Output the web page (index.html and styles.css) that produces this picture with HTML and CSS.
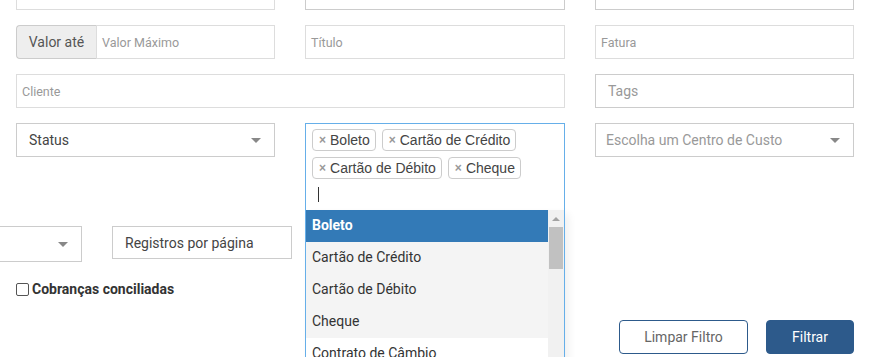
FILE: index.html
```html
<!DOCTYPE html>
<html lang="pt-BR">
<head>
<meta charset="utf-8">
<title>Filtros</title>
<link rel="stylesheet" href="styles.css">
</head>
<body>
<div class="page">
  <div class="grid">
    <div class="field"></div>
    <div class="field dark"></div>
    <div class="field dark"></div>

    <div class="group">
      <span class="addon">Valor até</span>
      <span class="field ph">Valor Máximo</span>
    </div>
    <div class="field ph">Título</div>
    <div class="field ph">Fatura</div>

    <div class="field ph span2">Cliente</div>
    <div class="field dark tags">Tags</div>

    <div class="select"><span class="sel-text">Status</span><span class="caret"></span></div>
    <div class="multi-wrap">
      <div class="multi">
        <div class="chips">
          <span class="chip"><span class="x">×</span>Boleto</span>
          <span class="chip"><span class="x">×</span>Cartão de Crédito</span>
          <span class="chip"><span class="x">×</span>Cartão de Débito</span>
          <span class="chip"><span class="x">×</span>Cheque</span>
        </div>
        <span class="cursor"></span>
      </div>
      <div class="dropdown">
        <ul class="options">
          <li class="opt hl">Boleto</li>
          <li class="opt sel">Cartão de Crédito</li>
          <li class="opt sel">Cartão de Débito</li>
          <li class="opt sel">Cheque</li>
          <li class="opt">Contrato de Câmbio</li>
        </ul>
        <div class="scrollbar">
          <span class="arrow-up"></span>
          <span class="thumb"></span>
        </div>
      </div>
    </div>
    <div class="select centro"><span class="sel-text muted">Escolha um Centro de Custo</span><span class="caret"></span></div>
  </div>

  <div class="row5">
    <div class="select tall"><span class="sel-text"></span><span class="caret"></span></div>
    <div class="field plain">Registros por página</div>
  </div>

  <label class="check"><span class="box"></span>Cobranças conciliadas</label>

  <div class="actions">
    <button class="btn outline">Limpar Filtro</button>
    <button class="btn primary">Filtrar</button>
  </div>
</div>
</body>
</html>
```

FILE: styles.css
```css
html, body {
  margin: 0;
  padding: 0;
  background: #fff;
  width: 885px;
  height: 357px;
  overflow: hidden;
  font-family: Roboto, "Liberation Sans", Arial, sans-serif;
  color: #333;
}

.page {
  padding-left: 16px;
  position: relative;
}

.grid {
  display: grid;
  grid-template-columns: 259px 260px 259px;
  column-gap: 30px;
  row-gap: 15px;
  margin-top: -24px;
  align-items: start;
}

.field {
  box-sizing: border-box;
  height: 34px;
  border: 1px solid #ddd;
  background: #fff;
  display: flex;
  align-items: center;
  padding: 0 5px;
  font-size: 12.5px;
}
.field.dark { border-color: #ccc; }
.ph { color: #999; }
.span2 { grid-column: span 2; }
.tags {
  font-size: 14px;
  color: #999;
  padding-left: 12px;
}

.group {
  display: flex;
  height: 34px;
}
.addon {
  box-sizing: border-box;
  width: 80px;
  height: 34px;
  background: #eee;
  border: 1px solid #ccc;
  border-right: 0;
  border-radius: 4px 0 0 4px;
  display: flex;
  align-items: center;
  justify-content: center;
  font-size: 14px;
  color: #555;
}
.group .field {
  flex: 1;
  border-left: 1px solid #ddd;
}

.select {
  box-sizing: border-box;
  height: 34px;
  border: 1px solid #ccc;
  background: #fff;
  display: flex;
  align-items: center;
  justify-content: space-between;
  padding: 0 13px 0 12px;
  font-size: 14px;
  color: #444;
}
.select.centro { padding-left: 10px; }
.sel-text.muted { color: #999; }
.caret {
  width: 0;
  height: 0;
  border-left: 5px solid transparent;
  border-right: 5px solid transparent;
  border-top: 5px solid #888;
  margin-top: 1px;
}

.multi-wrap {
  position: relative;
  height: 87px;
}
.multi {
  box-sizing: border-box;
  height: 87px;
  border: 1px solid #66afe9;
  border-bottom: 0;
  padding: 5px 0 0 6px;
}
.chips {
  display: flex;
  flex-wrap: wrap;
  column-gap: 6px;
  row-gap: 6px;
}
.chip {
  box-sizing: border-box;
  height: 22px;
  border: 1px solid #ccc;
  border-radius: 4px;
  background: #fff;
  padding: 0 5px 0 6px;
  display: inline-flex;
  align-items: center;
  font-family: "Liberation Sans", Arial, sans-serif;
  font-size: 14px;
  color: #444;
  white-space: nowrap;
}
.chip .x {
  color: #999;
  font-weight: bold;
  font-size: 12px;
  margin-right: 4px;
}
.cursor {
  display: block;
  width: 1px;
  height: 15px;
  background: #333;
  margin: 8px 0 0 6px;
}

.dropdown {
  position: absolute;
  top: 87px;
  left: 0;
  width: 260px;
  height: 160px;
  box-sizing: border-box;
  border-left: 1px solid #66afe9;
  border-right: 1px solid #66afe9;
  background: #fff;
  display: flex;
  box-shadow: 4px 4px 8px rgba(0, 0, 0, 0.06);
  z-index: 5;
}
.options {
  list-style: none;
  margin: 0;
  padding: 0;
  width: 242px;
}
.opt {
  height: 32px;
  line-height: 31px;
  padding-left: 6px;
  font-size: 14px;
  color: #333;
  background: #fff;
}
.opt.sel { background: #f4f4f4; }
.opt.hl {
  background: #337ab7;
  color: #fff;
  font-weight: bold;
}
.scrollbar {
  width: 16px;
  background: #f1f1f1;
  display: flex;
  flex-direction: column;
  align-items: center;
}
.arrow-up {
  width: 0;
  height: 0;
  border-left: 4px solid transparent;
  border-right: 4px solid transparent;
  border-bottom: 4px solid #a3a3a3;
  margin-top: 7px;
}
.thumb {
  width: 14px;
  height: 42px;
  background: #c1c1c1;
  margin-top: 6px;
}

.row5 {
  display: flex;
  gap: 30px;
  margin-top: 16px;
  margin-left: -113px;
  align-items: flex-start;
}
.row5 .select.tall {
  width: 179px;
  height: 36px;
}
.row5 .plain {
  width: 180px;
  height: 33px;
  font-size: 14px;
  color: #444;
  padding-left: 12px;
  border-color: #ccc;
}

.check {
  display: flex;
  align-items: center;
  margin-top: 19px;
  font-size: 14px;
  font-weight: bold;
  color: #333;
}
.box {
  box-sizing: border-box;
  width: 13px;
  height: 13px;
  border: 1px solid #555;
  border-radius: 2px;
  margin-right: 3px;
}

.actions {
  display: flex;
  justify-content: flex-end;
  gap: 18px;
  width: 838px;
  margin-top: 23px;
}
.btn {
  box-sizing: border-box;
  height: 34px;
  border-radius: 4px;
  font-family: Roboto, "Liberation Sans", Arial, sans-serif;
  font-size: 14px;
  cursor: pointer;
}
.btn.outline {
  width: 129px;
  background: #fff;
  border: 1px solid #2d5a8b;
  color: #666;
}
.btn.primary {
  width: 88px;
  background: #2d5a8b;
  border: 1px solid #2d5a8b;
  color: #fff;
}
```
